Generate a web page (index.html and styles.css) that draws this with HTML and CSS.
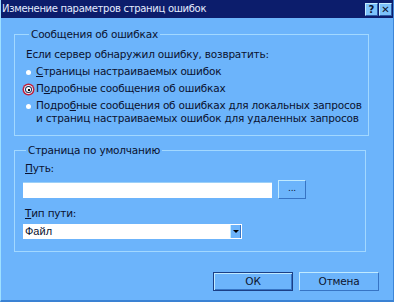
FILE: index.html
```
<!DOCTYPE html>
<html lang="ru">
<head>
    <meta charset="UTF-8">
    <title>Изменение параметров страниц ошибок</title>
    <link rel="stylesheet" href="styles.css">
</head>
<body>
    <div class="dialog">
        <!-- Заголовок окна -->
        <div class="titlebar">
            <span class="title">Изменение параметров страниц ошибок</span>
            <span class="tb-buttons">
                <span class="tb-btn">?</span>
                <span class="tb-btn">&#10005;</span>
            </span>
        </div>

        <!-- Сообщения об ошибках -->
        <fieldset class="group group-errors">
            <legend>Сообщения об ошибках</legend>
            <p class="lead">Если сервер обнаружил ошибку, возвратить:</p>
            <div class="option first">
                <span class="radio"></span>
                <span><u>С</u>траницы настраиваемых ошибок</span>
            </div>
            <div class="option">
                <span class="radio checked"></span>
                <span>П<u>о</u>дробные сообщения об ошибках</span>
            </div>
            <div class="option">
                <span class="radio"></span>
                <span>Подро<u>б</u>ные сообщения об ошибках для локальных запросов<br>и страниц настраиваемых ошибок для удаленных запросов</span>
            </div>
        </fieldset>

        <!-- Страница по умолчанию -->
        <fieldset class="group group-default">
            <legend>Страница по умолчанию</legend>
            <div class="label"><u>П</u>уть:</div>
            <div class="path-row">
                <span class="textbox"></span>
                <span class="btn btn-browse">...</span>
            </div>
            <div class="label label-type"><u>Т</u>ип пути:</div>
            <div class="select">
                <span class="select-text">Файл</span>
                <span class="select-arrow"></span>
            </div>
        </fieldset>

        <div class="actions">
            <span class="btn btn-default">ОК</span>
            <span class="btn">Отмена</span>
        </div>
    </div>
</body>
</html>
```

FILE: styles.css
```
body {
    margin: 0;
    font-family: "DejaVu Sans", Verdana, sans-serif;
    font-size: 10.5px;
    letter-spacing: -0.2px;
    color: #0a1230;
}

.dialog {
    width: 394px;
    height: 302px;
    box-sizing: border-box;
    background: #6cb4fb;
    border-left: 1px solid #9ee0ff;
    border-right: 1px solid #3d86d8;
    border-bottom: 2px solid #3a82d4;
    overflow: hidden;
}

/* Заголовок */
.titlebar {
    height: 18px;
    background: #0c1d6c;
    display: flex;
    justify-content: space-between;
    align-items: center;
    padding: 0 1px 0 1px;
}

.title {
    color: #e4ecff;
    font-size: 10px;
    letter-spacing: -0.3px;
    line-height: 18px;
}

.tb-buttons {
    display: flex;
    gap: 1px;
}

.tb-btn {
    width: 13px;
    height: 13px;
    box-sizing: border-box;
    background: #7cc2fb;
    border-top: 1px solid #c4ecff;
    border-left: 1px solid #c4ecff;
    border-right: 1px solid #2a5aa8;
    border-bottom: 1px solid #2a5aa8;
    font-size: 10px;
    font-weight: bold;
    letter-spacing: 0;
    line-height: 11px;
    text-align: center;
    color: #0c1430;
}

/* Группы */
.group {
    margin: 0 0 0 13px;
    width: 352px;
    box-sizing: border-box;
    border: 1px solid #a2d8ff;
    padding: 0 6px 0 11px;
}

.group legend {
    padding: 0 2px;
    margin-left: 3px;
    line-height: 12px;
}

.group-errors {
    margin-top: 10px;
    padding-top: 8px;
    padding-bottom: 10px;
}

.lead {
    margin: 0;
    line-height: 13px;
}

.option {
    display: flex;
    align-items: flex-start;
    line-height: 13px;
    margin-top: 4px;
    white-space: nowrap;
}

.option.first {
    margin-top: 4px;
}

.radio {
    flex: none;
    width: 5px;
    height: 5px;
    margin: 5px 5px 0 0;
    border-radius: 50%;
    background: #ffffff;
    position: relative;
}

.radio.checked {
    background: #ffffff;
    box-shadow: 0 0 0 1px #20305a, 0 0 0 2px #e8f4ff, 0 0 0 3.5px #c0203c;
}

.radio.checked::after {
    content: "";
    position: absolute;
    left: 1.5px;
    top: 1.5px;
    width: 2px;
    height: 2px;
    background: #000;
}

.group-default {
    margin-top: 8px;
    padding-top: 6px;
    padding-bottom: 12px;
    padding-left: 8px;
}

.label {
    line-height: 13px;
    margin-left: 2px;
}

.path-row {
    display: flex;
    align-items: center;
    gap: 6px;
    margin-top: 5px;
}

.textbox {
    width: 249px;
    height: 16px;
    box-sizing: border-box;
    background: #ffffff;
    border-top: 1px solid #9cd0f8;
}

.btn {
    box-sizing: border-box;
    background: #6cb4fb;
    border-top: 1px solid #c0eaff;
    border-left: 1px solid #c0eaff;
    border-right: 1px solid #3774c4;
    border-bottom: 1px solid #3774c4;
    text-align: center;
    color: #0c1430;
}

.btn-browse {
    width: 28px;
    height: 19px;
    line-height: 15px;
    font-size: 9px;
}

.label-type {
    margin-top: 8px;
}

.select {
    width: 219px;
    height: 15px;
    margin-top: 4px;
    box-sizing: border-box;
    background: #ffffff;
    display: flex;
    justify-content: space-between;
    align-items: stretch;
}

.select-text {
    font-family: "Liberation Sans", Arial, sans-serif;
    font-size: 11px;
    letter-spacing: 0;
    line-height: 15px;
    padding-left: 2px;
}

.select-arrow {
    width: 9px;
    margin: 1px;
    background: #6cb4fb;
    border-left: 1px solid #c0eaff;
    border-right: 1px solid #3774c4;
    display: flex;
    align-items: center;
    justify-content: center;
}

.select-arrow::before {
    content: "";
    border-left: 3px solid transparent;
    border-right: 3px solid transparent;
    border-top: 3px solid #000;
}

/* Кнопки внизу */
.actions {
    display: flex;
    justify-content: flex-end;
    gap: 6px;
    margin-top: 20px;
    padding-right: 14px;
}

.actions .btn {
    width: 80px;
    height: 19px;
    line-height: 17px;
}

.btn-default {
    border: 1px solid #1b3f86;
    box-shadow: inset 1px 1px 0 #c0eaff, inset -1px -1px 0 #3774c4;
}
```
